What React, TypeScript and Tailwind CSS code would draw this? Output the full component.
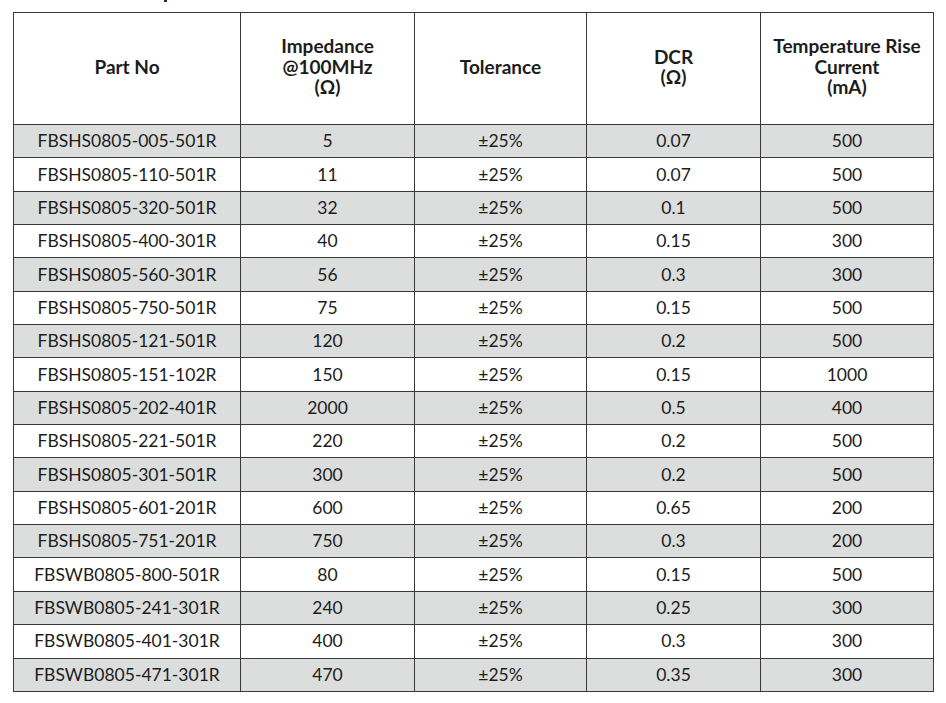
const rows: [string, string, string, string, string][] = [
  ["FBSHS0805-005-501R", "5", "±25%", "0.07", "500"],
  ["FBSHS0805-110-501R", "11", "±25%", "0.07", "500"],
  ["FBSHS0805-320-501R", "32", "±25%", "0.1", "500"],
  ["FBSHS0805-400-301R", "40", "±25%", "0.15", "300"],
  ["FBSHS0805-560-301R", "56", "±25%", "0.3", "300"],
  ["FBSHS0805-750-501R", "75", "±25%", "0.15", "500"],
  ["FBSHS0805-121-501R", "120", "±25%", "0.2", "500"],
  ["FBSHS0805-151-102R", "150", "±25%", "0.15", "1000"],
  ["FBSHS0805-202-401R", "2000", "±25%", "0.5", "400"],
  ["FBSHS0805-221-501R", "220", "±25%", "0.2", "500"],
  ["FBSHS0805-301-501R", "300", "±25%", "0.2", "500"],
  ["FBSHS0805-601-201R", "600", "±25%", "0.65", "200"],
  ["FBSHS0805-751-201R", "750", "±25%", "0.3", "200"],
  ["FBSWB0805-800-501R", "80", "±25%", "0.15", "500"],
  ["FBSWB0805-241-301R", "240", "±25%", "0.25", "300"],
  ["FBSWB0805-401-301R", "400", "±25%", "0.3", "300"],
  ["FBSWB0805-471-301R", "470", "±25%", "0.35", "300"],
];

const headers = [
  ["Part No"],
  ["Impedance", "@100MHz", "(Ω)"],
  ["Tolerance"],
  ["DCR", "(Ω)"],
  ["Temperature Rise", "Current", "(mA)"],
];

export default function App() {
  return (
    <div className="w-[946px] h-[703px] bg-white text-[#1c1c1c] overflow-hidden font-['Lato','Liberation_Sans',sans-serif]">
      {/* only the tail of the section title above is in frame */}
      <div className="h-[12px]">
        <div className="ml-[164px] w-[3px] h-[2px] bg-[#2a2a3a]" />
      </div>
      <table className="ml-[13px] border-collapse table-fixed w-[920px]">
        <colgroup>
          <col className="w-[227px]" />
          <col className="w-[174px]" />
          <col className="w-[172px]" />
          <col className="w-[174px]" />
          <col className="w-[173px]" />
        </colgroup>
        <thead>
          <tr className="h-[112px]">
            {headers.map((h, i) => (
              <th
                key={i}
                className="border border-[#3a3838] text-center align-middle font-bold text-[19px] leading-[20.5px] px-1 pb-[3px]"
              >
                {h.map((line) => (
                  <div key={line}>{line}</div>
                ))}
              </th>
            ))}
          </tr>
        </thead>
        <tbody>
          {rows.map((r, i) => (
            <tr key={r[0]} className={i % 2 === 0 ? "h-[33.35px] bg-[#dcdedd]" : "h-[33.35px] bg-white"}>
              {r.map((c, j) => (
                <td key={j} className="border border-[#3a3838] text-center align-middle text-[17.5px] leading-[20px] p-0">
                  {c}
                </td>
              ))}
            </tr>
          ))}
        </tbody>
      </table>
    </div>
  );
}
